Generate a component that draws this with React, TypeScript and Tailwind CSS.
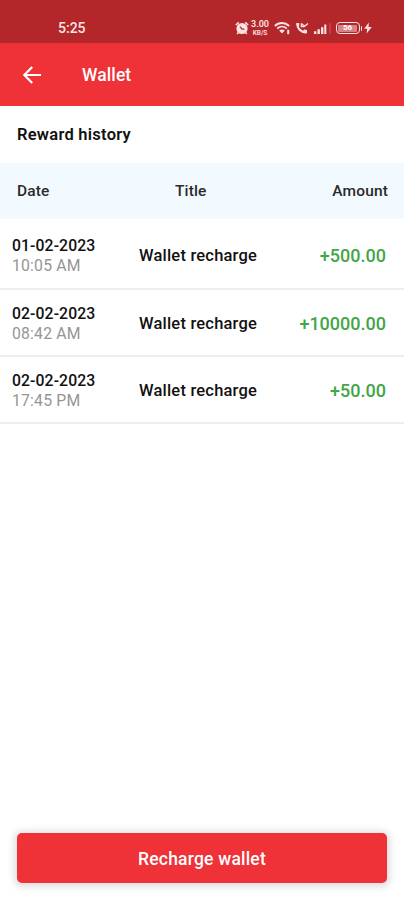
function AlarmIcon() {
  return (
    <svg viewBox="0 0 14 14" className="size-[14px] shrink-0" fill="none" stroke="currentColor">
      <circle cx="7" cy="7.5" r="5.6" fill="currentColor" stroke="none" />
      <path d="M.8 4 3.8 1.4M13.2 4l-3-2.6M3.4 11.6 2.2 13M10.6 11.6l1.2 1.4" strokeWidth="1.6" />
      <path d="M5 5.6 7 8.2h2.4" stroke="#b3272b" strokeWidth="1.2" />
    </svg>
  );
}

function WifiIcon() {
  return (
    <svg viewBox="0 0 17 14" className="h-[14px] w-[17px] shrink-0" fill="none" stroke="currentColor">
      <path d="M.8 5C5 1 11 1 15.2 5" strokeWidth="1.8" />
      <path d="M3.2 7.6c2.8-2.6 6.8-2.6 9.6 0" strokeWidth="1.7" />
      <path d="M5.2 9.5c1.8-1.5 3.8-1.5 5.6 0L8 12.6z" fill="currentColor" stroke="none" />
      <path d="M14.2 8.8v4.4" strokeWidth="2" />
    </svg>
  );
}

function CallIcon() {
  return (
    <svg viewBox="0 0 14 14" className="size-[14px] shrink-0" fill="none" stroke="currentColor">
      <path d="M2.4 2.8c-.4 4.2 3.7 8.6 8.5 8.6" strokeWidth="2.2" />
      <path d="M1.2 2h3v3.1l-2 .8zM8 10.2l1-1.8 3 .7v3.2H9.5z" fill="currentColor" stroke="none" />
      <path d="M6.4 2.2v3.4h3.2M6.6 2.6l2.8 2.7L13 2.6" strokeWidth="1.3" />
    </svg>
  );
}

function SignalIcon() {
  return (
    <svg viewBox="0 0 17 13" className="h-[13px] w-[17px] shrink-0" fill="currentColor">
      <path d="M0 9.3h2.4V12H0zM3.5 7.3h2.4V12H3.5zM7 5.3h2.4V12H7zM10.3 2.5h2v9.5h-2z" />
      <path d="M15.6 1h.9v11h-.9z" opacity=".3" />
    </svg>
  );
}

function Battery({ level }: { level: number }) {
  return (
    <div className="flex items-center">
      <div className="flex h-[12px] w-[24px] items-center justify-center rounded-[4px] border border-current p-[1.5px]">
        <span className="flex h-full w-full items-center justify-center rounded-[1px] bg-[#d98286] text-[8px] leading-none font-bold text-white">
          {level}
        </span>
      </div>
      <span className="ml-[1px] h-[5px] w-[1.5px] rounded-r bg-current" />
    </div>
  );
}

function StatusBar() {
  return (
    <div className="flex h-[43px] shrink-0 items-start bg-[#b3272b] pt-[20px] pr-[32px] pl-[58px] text-[#fbe3e3]">
      <span className="text-[14px] leading-[17px] font-medium">5:25</span>
      <div className="mt-[1px] ml-auto flex h-[14px] items-center">
        <AlarmIcon />
        <div className="ml-[2px] flex w-[19px] flex-col items-center font-semibold">
          <span className="text-[9px] leading-[9px]">3.00</span>
          <span className="text-[6.5px] leading-[8px]">KB/S</span>
        </div>
        <span className="ml-[4px]">
          <WifiIcon />
        </span>
        <span className="ml-[4px]">
          <CallIcon />
        </span>
        <span className="mr-[5px] ml-[5px]">
          <SignalIcon />
        </span>
        <Battery level={56} />
        <svg viewBox="0 0 8 12" className="ml-[2px] h-[12px] w-[8px]" fill="currentColor">
          <path d="M4.8.5.2 6.8h3L2.6 11.5 7.8 5H4.6z" />
        </svg>
      </div>
    </div>
  );
}

type Transaction = {
  id: number;
  date: string;
  time: string;
  title: string;
  amount: string;
};

const transactions: Transaction[] = [
  { id: 1, date: "01-02-2023", time: "10:05 AM", title: "Wallet recharge", amount: "+500.00" },
  { id: 2, date: "02-02-2023", time: "08:42 AM", title: "Wallet recharge", amount: "+10000.00" },
  { id: 3, date: "02-02-2023", time: "17:45 PM", title: "Wallet recharge", amount: "+50.00" },
];

export default function App() {
  return (
    <div className="flex h-[900px] w-[404px] flex-col overflow-hidden bg-white font-['Roboto',sans-serif] text-[#111]">
      <StatusBar />
      <header className="flex h-[63px] shrink-0 items-center bg-[#ef3138] pt-px pl-[23px] text-white">
        <svg viewBox="0 0 18 18" className="size-[18px]" fill="none" stroke="currentColor" strokeWidth="2.2">
          <path d="M18 9H1.5M9.2 1 1.4 9l7.8 8" />
        </svg>
        <h1 className="ml-[41px] text-[17.5px] font-medium tracking-[0.1px]">Wallet</h1>
      </header>
      <h2 className="flex h-[57px] shrink-0 items-center px-[17px] pt-[2px] text-[16.5px] font-semibold tracking-[0.25px]">
        Reward history
      </h2>
      <div className="flex h-[56px] shrink-0 items-center bg-[#f3faff] pt-[2px] pr-[16px] pl-[17px] text-[15.5px] font-medium tracking-[0.15px] text-[#2a2a2a]">
        <span className="w-[158px]">Date</span>
        <span>Title</span>
        <span className="ml-auto">Amount</span>
      </div>
      <ul>
        {transactions.map((item) => (
          <li
            key={item.id}
            className="flex h-[67px] items-center border-b-2 border-[#eeeeee] pt-[2px] pr-[18px] pl-[12px] first:h-[71px] first:pt-[4px]"
          >
            <div className="w-[127px] pt-px text-[15.75px] leading-[20px]">
              <p className="font-medium tracking-[0.1px]">{item.date}</p>
              <p className="tracking-[0.2px] text-[#959595]">{item.time}</p>
            </div>
            <p className="pt-[2px] text-[16.5px] font-medium tracking-[0.2px]">{item.title}</p>
            <p className="ml-auto text-[18px] leading-[26px] font-medium text-[#43a548]">{item.amount}</p>
          </li>
        ))}
      </ul>
      <button className="mx-[17px] mt-auto mb-[17px] h-[50px] shrink-0 rounded-[5px] bg-[#ef3138] pt-[2px] text-[17.5px] font-medium tracking-[0.2px] text-white shadow-[0_1px_7px_3px_rgba(0,0,0,0.13)]">
        Recharge wallet
      </button>
    </div>
  );
}
